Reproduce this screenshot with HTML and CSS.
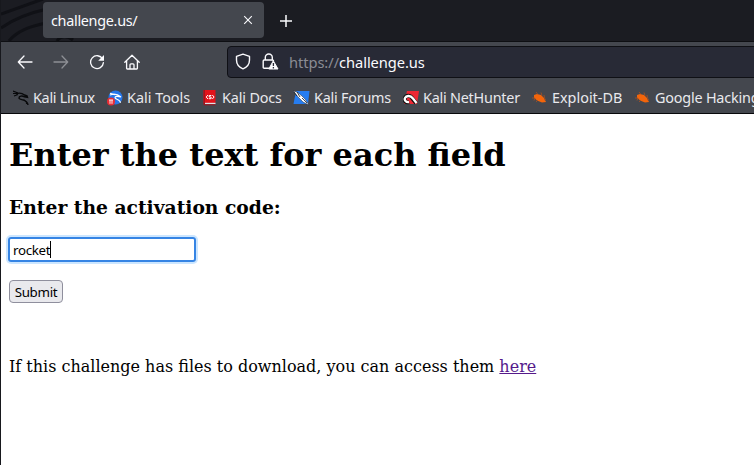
FILE: index.html
```html
<!DOCTYPE html>
<html lang="en">
<head>
<meta charset="utf-8">
<title>challenge.us/</title>
<link rel="stylesheet" href="styles.css">
</head>
<body>
<div class="window">
  <header class="tabs">
    <svg class="tabs-art" width="320" height="41" viewBox="0 0 320 41" fill="none">
      <path d="M0 14C14 9 28 4 42-1M0 28C14 18 28 13 46 9M8 41C16 31 28 26 46 23" stroke="#101116" stroke-width="3"/>
      <path d="M56 41c3-5 10-6 16-1" stroke="#0d0e12" stroke-width="3"/>
    </svg>
    <div class="tab">
      <span>challenge.us/</span>
      <svg class="close" width="10" height="10" viewBox="0 0 10 10"><path d="M1.2 1.2l7.6 7.6M8.8 1.2L1.2 8.8" stroke="#fbfbfe" stroke-width="1.1"/></svg>
    </div>
    <svg class="plus" width="14" height="14" viewBox="0 0 14 14"><path d="M7 1v12M1 7h12" stroke="#fbfbfe" stroke-width="1.5"/></svg>
  </header>
  <nav class="toolbar">
    <svg class="nav-icon" width="16" height="16" viewBox="0 0 16 16"><path d="M15 8H1.5M7 2L1.3 8 7 14"/></svg>
    <svg class="nav-icon dim" width="16" height="16" viewBox="0 0 16 16"><path d="M1 8h13.5M9 2l5.7 6L9 14"/></svg>
    <svg class="nav-icon" width="16" height="16" viewBox="0 0 16 16"><path d="M13.6 5A6.4 6.4 0 1 0 14.4 8.6"/><path d="M15 1v5.8H9.2z" fill="#fbfbfe" stroke="none"/></svg>
    <svg class="nav-icon home" width="16" height="16" viewBox="0 0 16 16"><path d="M.8 8.2L8 1.2l7.2 7M2.6 7v7.3q0 .7.7.7h9.4q.7 0 .7-.7V7M6 15v-4.2q0-1 1-1h2q1 0 1 1V15"/></svg>
    <div class="urlbar">
      <svg class="shield" width="16" height="17" viewBox="0 0 16 17"><path d="M8 1.2L14.5 3.4V7c0 4-2.4 7.2-6.5 8.8C3.900 14.200 1.500 11 1.500 7V3.400z" fill="none" stroke="#fbfbfe" stroke-width="1.4" stroke-linejoin="round"/></svg>
      <svg class="lock" width="17" height="17" viewBox="0 0 17 17"><path d="M3.300 7V4.500a3.500 3.500 0 0 1 7 0V7M7 15.200H2.200q-1 0-1-1V8q0-1 1-1H10.500q1 0 1 1" fill="none" stroke="#fbfbfe" stroke-width="1.4"/><path d="M11.300 7.800L16 16H6.800z" fill="#fbfbfe" stroke="#fbfbfe" stroke-linejoin="round"/><path d="M11.400 10v3M11.400 14v1.400" stroke="#282a36" stroke-width="1.300"/></svg>
      <span class="url"><span class="scheme">https://</span>challenge.us</span>
    </div>
  </nav>
  <div class="bookmarks">
    <div class="bookmark linux">
      <svg width="16" height="16" viewBox="0 0 16 16" fill="none" stroke="#08090b"><path d="M0 1l5 2M0 3.500l5 0M1 6l4-1.500" stroke-width="1.200"/><path d="M3 4c3-1.500 6-1 8.500 1l2.500.8.5 1.500-3-.5C9 5.500 6 6 6 8c0 2.500 8.500.5 9 7" stroke-width="1.400"/><path d="M10.500 9.500c2 1 3 2 3 4.500" stroke-width="1"/></svg>
      <span>Kali Linux</span></div>
    <div class="bookmark tools">
      <svg width="16" height="16" viewBox="0 0 16 16"><circle cx="8.500" cy="7.500" r="7" fill="#2676e8"/><path d="M3 5c5-2 8-.5 11 2-3-1-6-1-6 .8s5 1 5.500 5M3 3.200l5 1.500" fill="none" stroke="#fff" stroke-width="1.200"/><circle cx="4" cy="11.500" r="4" fill="#e92d35"/><path d="M2 10h4M3 10v3.800M5 10v3.800" stroke="#fff" stroke-width=".9"/></svg>
      <span>Kali Tools</span></div>
    <div class="bookmark docs">
      <svg width="16" height="16" viewBox="0 0 16 16"><path d="M2.500 0h12v13h-12z" fill="#e3131b"/><path d="M2.500 0h1.500v15h-1.500z" fill="#a5121c"/><path d="M4 12.800h10.500V14.200H4z" fill="#dce3e8"/><path d="M3 14.200h11.500V15.300H3z" fill="#9b1520"/><path d="M7 5L5.200 7l1.800 2M11.300 5l1.800 2-1.800 2M10.300 5.500H8.200v1.500h1.900v1.700H7.800" fill="none" stroke="#fff" stroke-width="1"/></svg>
      <span>Kali Docs</span></div>
    <div class="bookmark forums">
      <svg width="17" height="16" viewBox="0 0 17 16"><path d="M3 1h13.500l-1.500 13H.5z" fill="#267df0"/><path d="M0 1l4 1 5 4 3 3 4 6-6-3-5-5z" fill="#fff" stroke="#182335" stroke-width=".5"/><path d="M1 2l3 4M4 2l3 5M9 8l5 5" stroke="#111a28" stroke-width=".8"/></svg>
      <span>Kali Forums</span></div>
    <div class="bookmark hunter">
      <svg width="16" height="16" viewBox="0 0 16 16"><path d="M4 1h12l-2 13H1z" fill="#ed2733"/><path d="M13 13L9 8C7 5 3 5 2 8s1 5 4 4" fill="none" stroke="#111" stroke-width="4"/><path d="M13.500 13L10 8.500C7 4.500 3 6 2 8s1 4.500 4 4" fill="none" stroke="#fff" stroke-width="2.300"/></svg>
      <span>Kali NetHunter</span></div>
    <div class="bookmark exploit">
      <svg width="16" height="16" viewBox="0 0 16 16"><path d="M2 5l3-1 4 1 3 3 2 4-4 .5-5-2L2 7.500z" fill="#f3650b"/><path d="M0 8l3 0-1 2.500M4 2l2 2.500M9 2.500l1 3M12 5l.5 3.500M4 12l2-2M14 9l-2 1" fill="none" stroke="#ac501f" stroke-width=".8"/></svg>
      <span>Exploit-DB</span></div>
    <div class="bookmark google">
      <svg width="16" height="16" viewBox="0 0 16 16"><path d="M2 5l3-1 4 1 3 3 2 4-4 .5-5-2L2 7.500z" fill="#f3650b"/><path d="M0 8l3 0-1 2.500M4 2l2 2.500M9 2.500l1 3M12 5l.5 3.500M4 12l2-2M14 9l-2 1" fill="none" stroke="#ac501f" stroke-width=".8"/></svg>
      <span>Google Hacking DB</span></div>
  </div>
  <main class="page">
    <h1>Enter the text for each field</h1>
    <h3>Enter the activation code:</h3>
    <div class="field"><span>rocket</span><i class="caret"></i></div>
    <button class="submit" type="button">Submit</button>
    <p>If this challenge has files to download, you can access them <a href="#">here</a></p>
  </main>
</div>
</body>
</html>
```
FILE: styles.css
```css
* { box-sizing: border-box; }
body { margin: 0; background: #fff; overflow: hidden; }
.window {
  height: 465px;
  border-left: 1px solid #17181d;
  font-family: "Noto Sans", sans-serif;
  font-size: 14.67px;
  color: #fbfbfe;
  overflow: hidden;
}
svg { flex: none; display: block; }
.tabs {
  position: relative;
  display: flex;
  align-items: flex-start;
  height: 42px;
  padding: 2px 0 0 42px;
  background: #1b1c22;
  border-bottom: 1px solid #0e0f13;
}
.tabs-art { position: absolute; left: 0; top: 0; }
.tab {
  position: relative;
  display: flex;
  align-items: center;
  justify-content: space-between;
  width: 221px;
  height: 36px;
  padding: 0 11px 0 8px;
  border-radius: 4px;
  background: #44474e;
  font-size: 14.4px;
  letter-spacing: -.3px;
}
.plus { margin: 12px 0 0 15px; }
.toolbar {
  display: flex;
  align-items: center;
  height: 41px;
  padding: 0 0 1px 16px;
  background: #44474e;
}
.nav-icon {
  margin-right: 20px;
  fill: none;
  stroke: #fbfbfe;
  stroke-width: 1.3;
  stroke-linecap: round;
  stroke-linejoin: round;
}
.home { margin: 0 21px 0 -1px; }
.dim { opacity: .4; }
.urlbar {
  display: flex;
  align-items: center;
  flex: none;
  width: 560px;
  height: 32px;
  margin-left: 66px;
  padding: 0 0 1px 7px;
  border: 1px solid #0f1015;
  border-radius: 4px;
  background: #282a36;
}
.lock { margin-left: 11px; }
.url { margin-left: 10px; font-size: 14.67px; letter-spacing: -.06px; }
.scheme { color: #8b8c94; }
.bookmarks {
  display: flex;
  align-items: center;
  height: 31px;
  padding: 0 0 1px 12px;
  background: #44474e;
  border-bottom: 1px solid #08080b;
}
.bookmark {
  display: flex;
  align-items: center;
  flex: none;
  gap: 4px;
  color: #e9e9ed;
  font-size: 14.4px;
  line-height: 20px;
  white-space: nowrap;
}
.linux { width: 94px; letter-spacing: -.3px; }
.tools { width: 94px; }
.docs { width: 92px; gap: 5px; letter-spacing: -.15px; }
.forums { width: 110px; letter-spacing: -.23px; }
.hunter { width: 129px; letter-spacing: -.23px; }
.exploit { width: 103px; }
.google { letter-spacing: -.2px; }
.page {
  padding: 0 8px;
  color: #000;
  font-family: "DejaVu Serif", serif;
  font-size: 16px;
}
h1 { margin: 0; padding-top: 22px; font-size: 32px; line-height: 38px; }
h3 { margin: 22px 0 0; font-size: 18.72px; line-height: 22px; }
.field {
  display: flex;
  align-items: center;
  width: 188px;
  height: 25px;
  margin: 19px 0 0 -1px;
  padding-left: 3px;
  border: 2px solid #3584e4;
  border-radius: 3px;
  box-shadow: 0 0 0 2px #cce6ff;
  font: 13.33px "Noto Sans", sans-serif;
  letter-spacing: -.3px;
}
.caret { width: 1px; height: 17px; background: #000; }
.submit {
  display: block;
  width: 54px;
  height: 23px;
  margin-top: 18px;
  padding: 1px 0 0;
  border: 1px solid #8f8f9d;
  border-radius: 4px;
  background: #e9e9ed;
  color: #000;
  font: 13.33px/20px "Noto Sans", sans-serif;
  letter-spacing: -.3px;
}
p { margin: 54px 0 0; line-height: 19px; }
a { color: #551a8b; }
```
